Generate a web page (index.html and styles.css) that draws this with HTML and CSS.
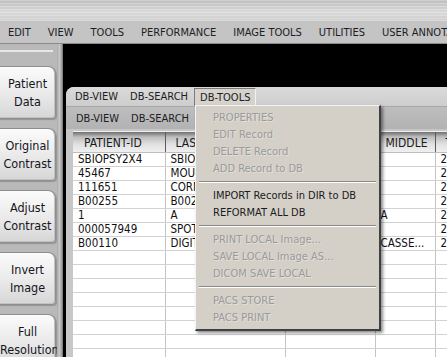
FILE: index.html
```html
<!DOCTYPE html>
<html lang="en">
<head>
    <meta charset="UTF-8">
    <title>DB Tools</title>
    <link rel="stylesheet" href="styles.css">
</head>
<body>
    <div class="app">
        <div class="titlebar"></div>
        <nav class="menubar">
            <span>EDIT</span>
            <span>VIEW</span>
            <span>TOOLS</span>
            <span>PERFORMANCE</span>
            <span>IMAGE TOOLS</span>
            <span>UTILITIES</span>
            <span>USER ANNOTATIONS</span>
        </nav>
        <div class="main">
            <aside class="sidebar">
                <div class="groove"></div>
                <button class="side-btn">Patient<br>Data</button>
                <button class="side-btn">Original<br>Contrast</button>
                <button class="side-btn">Adjust<br>Contrast</button>
                <button class="side-btn">Invert<br>Image</button>
                <button class="side-btn">Full<br>Resolution</button>
            </aside>
            <div class="splitter"></div>
            <section class="viewer">
                <div class="db-panel">
                    <div class="tabs tabs-top">
                        <span class="tab">DB-VIEW</span>
                        <span class="tab">DB-SEARCH</span>
                        <span class="tab active">DB-TOOLS</span>
                    </div>
                    <div class="tabs tabs-sub">
                        <span class="tab">DB-VIEW</span>
                        <span class="tab">DB-SEARCH</span>
                        <span class="tab">DB-TOOLS</span>
                    </div>
                    <div class="grid-wrap">
                        <table class="records">
                            <colgroup>
                                <col class="c-id"><col class="c-last"><col class="c-first"><col class="c-mid"><col class="c-date">
                            </colgroup>
                            <thead>
                                <tr><th>PATIENT-ID</th><th>LAST</th><th>FIRST</th><th>MIDDLE</th><th>TIME</th></tr>
                            </thead>
                            <tbody id="rows">
                                <tr><td>SBIOPSY2X4</td><td>SBIOPSY</td><td>TEST</td><td></td><td>2</td></tr>
                                <tr><td>45467</td><td>MOUSE</td><td>MICKEY</td><td></td><td>2</td></tr>
                                <tr><td>111651</td><td>CORNER</td><td>JANE</td><td></td><td>2</td></tr>
                                <tr><td>B00255</td><td>B00255</td><td>B00255</td><td></td><td>2</td></tr>
                                <tr><td>1</td><td>A</td><td>A</td><td>A</td><td>2</td></tr>
                                <tr><td>000057949</td><td>SPOT</td><td>VIEW</td><td></td><td>2</td></tr>
                                <tr><td>B00110</td><td>DIGITAL</td><td>PHANTOM</td><td>CASSE...</td><td>2</td></tr>
                                <tr><td></td><td></td><td></td><td></td><td></td></tr>
                                <tr><td></td><td></td><td></td><td></td><td></td></tr>
                                <tr><td></td><td></td><td></td><td></td><td></td></tr>
                                <tr><td></td><td></td><td></td><td></td><td></td></tr>
                                <tr><td></td><td></td><td></td><td></td><td></td></tr>
                                <tr><td></td><td></td><td></td><td></td><td></td></tr>
                                <tr><td></td><td></td><td></td><td></td><td></td></tr>
                                <tr><td></td><td></td><td></td><td></td><td></td></tr>
                            </tbody>
                        </table>
                    </div>

                    <div class="dropdown">
                        <div class="menu-item disabled">PROPERTIES</div>
                        <div class="menu-item disabled">EDIT Record</div>
                        <div class="menu-item disabled">DELETE Record</div>
                        <div class="menu-item disabled">ADD Record to DB</div>
                        <div class="menu-sep"></div>
                        <div class="menu-item">IMPORT Records in DIR to DB</div>
                        <div class="menu-item">REFORMAT ALL DB</div>
                        <div class="menu-sep"></div>
                        <div class="menu-item disabled">PRINT LOCAL Image...</div>
                        <div class="menu-item disabled">SAVE LOCAL Image AS...</div>
                        <div class="menu-item disabled">DICOM SAVE LOCAL</div>
                        <div class="menu-sep"></div>
                        <div class="menu-item disabled">PACS STORE</div>
                        <div class="menu-item disabled">PACS PRINT</div>
                    </div>
                </div>
            </section>
        </div>
    </div>
</body>
</html>
```

FILE: styles.css
```css
body {
    margin: 0;
    width: 447px;
    height: 357px;
    overflow: hidden;
    font-family: "DejaVu Sans Condensed", "DejaVu Sans", sans-serif;
    font-stretch: condensed;
    font-size: 11px;
    color: #1c1c24;
    background-color: #000;
}

.app {
    display: flex;
    flex-direction: column;
    height: 357px;
}

.titlebar {
    height: 20px;
    background:
        repeating-linear-gradient(180deg, rgba(255,255,255,0.25) 0 1px, rgba(0,0,0,0) 1px 3px),
        linear-gradient(180deg, #bdbdbd, #d9d9d9 60%, #cfcfcf);
}

.menubar {
    height: 23px;
    display: flex;
    align-items: center;
    gap: 17px;
    padding-left: 8px;
    white-space: nowrap;
    overflow: hidden;
    background-color: #c4c4c4;
    border-top: 1px solid #dcdcdc;
    box-sizing: border-box;
}

.main {
    flex: 1;
    display: flex;
    min-height: 0;
    border-top: 1px solid #8a8a8a;
}

.sidebar {
    width: 57px;
    flex-shrink: 0;
    background-color: #b9b9b9;
    display: flex;
    flex-direction: column;
    overflow: hidden;
}

.groove {
    width: 53px;
    height: 5px;
    margin: 6px 0 14px 0;
    border-top: 1px solid #e6e6e6;
    border-bottom: 1px solid #e6e6e6;
    background-color: #a4a4a4;
}

.side-btn {
    width: 62px;
    height: 53px;
    margin: 0 0 9px -6px;
    padding: 0 0 0 6px;
    flex-shrink: 0;
    font-family: inherit;
    font-stretch: condensed;
    font-size: 12.5px;
    line-height: 18px;
    color: #15151c;
    text-align: center;
    border: 1px solid #8e8e8e;
    border-left: none;
    border-radius: 0 8px 4px 0;
    background: linear-gradient(180deg, #fbfbfb, #e9e9e9 55%, #d6d6d6);
    box-shadow: inset -1px -1px 0 #c2c2c2, 1px 1px 1px rgba(0,0,0,0.2);
}

.splitter {
    width: 6px;
    flex-shrink: 0;
    background: linear-gradient(90deg, #a9a9a9, #c9c9c9 40%, #9c9c9c 80%, #6e6e6e);
}

.viewer {
    flex: 1;
    background-color: #000;
    padding: 43px 0 0 3px;
    min-width: 0;
}

.db-panel {
    position: relative;
    height: 100%;
    border-top-left-radius: 8px;
    background: linear-gradient(180deg, #d9d9d9, #c6c6c6 40px, #c8c8c8);
    overflow: hidden;
}

.tabs {
    display: flex;
    white-space: nowrap;
}

.tabs-top {
    height: 19px;
    padding-left: 3px;
    align-items: stretch;
    background: linear-gradient(180deg, #dadada, #cdcdcd);
}

.tabs-sub {
    height: 22px;
    padding-left: 4px;
    margin-bottom: 2px;
    align-items: center;
    background: linear-gradient(180deg, #bdbdbd, #b2b2b2);
    border-top: 1px solid #a8a8a8;
}

.tab {
    padding: 0 6px;
    display: flex;
    align-items: center;
}

.tab.active {
    margin-top: 1px;
    padding: 0 5px;
    background-color: #d6d3cc;
    border: 1px solid #7c7c7c;
    border-right-color: #f2f2f2;
    border-bottom: none;
}

.grid-wrap {
    margin-left: 7px;
    background-color: #fff;
    border-top: 1px solid #f0f0f0;
}

.records {
    table-layout: fixed;
    width: 442px;
    border-collapse: collapse;
    font-size: 11.5px;
}

.c-id { width: 92px; }
.c-last { width: 120px; }
.c-first { width: 90px; }
.c-mid { width: 60px; }
.c-date { width: 80px; }

.records th {
    height: 19px;
    padding: 1px 0 0 10px;
    text-align: left;
    font-weight: normal;
    font-size: 12px;
    color: #1a1a1a;
    white-space: nowrap;
    overflow: hidden;
    border-right: 1px solid #5a5a5a;
    border-bottom: 1px solid #bdbdbd;
    background: linear-gradient(180deg, #6f6f6f, #bdbdbd 25%, #e0e0e0 60%, #f0f0f0);
}

.records th:first-child {
    padding-left: 11px;
}

.records td {
    height: 13px;
    padding: 0 0 0 5px;
    line-height: 13px;
    white-space: nowrap;
    overflow: hidden;
    color: #111;
    border-right: 1px solid #c4c4c4;
    border-bottom: 1px solid #d2d2d2;
}

.dropdown {
    position: absolute;
    left: 129px;
    top: 18px;
    width: 183px;
    padding: 3px 0;
    background-color: #d4d0c8;
    border: 1px solid #f4f4f4;
    border-right: 2px solid #404040;
    border-bottom: 2px solid #404040;
    box-shadow: 2px 2px 3px rgba(0,0,0,0.45);
}

.menu-item {
    height: 17px;
    line-height: 17px;
    padding-left: 17px;
    white-space: nowrap;
    color: #1a1a22;
}

.menu-item.disabled {
    color: #9a9a9a;
    text-shadow: 1px 1px 0 rgba(255,255,255,0.35);
}

.menu-sep {
    height: 0;
    margin: 4px 3px 4px 3px;
    border-top: 1px solid #888;
    border-bottom: 1px solid #fff;
}
```
